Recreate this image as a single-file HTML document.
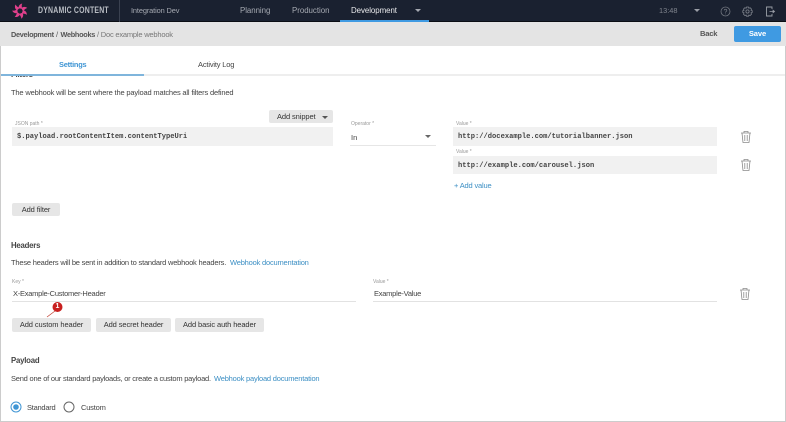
<!DOCTYPE html>
<html><head><meta charset="utf-8"><style>
html,body{margin:0;padding:0;background:#fff}
#p{position:relative;width:786px;height:422px;overflow:hidden;background:#fff;font-family:"Liberation Sans",sans-serif;color:#333;filter:blur(.3px)}
#p div,#p svg{position:absolute}
.t{white-space:nowrap;line-height:10px}
.s{font-size:7.5px;letter-spacing:-.17px;color:#444}
.h{font-size:7.8px;font-weight:bold;letter-spacing:-.22px;color:#444}
.b{background:#e6e6e6;border-radius:2px;font-size:7.5px;letter-spacing:-.1px;line-height:14px;height:14px;text-align:center;color:#333;white-space:nowrap}
.in{background:#f1f1f1}
.m{font-family:"Liberation Mono",monospace;font-size:7.1px;font-weight:bold;color:#444;white-space:nowrap;line-height:10px}
.l{font-size:5px;color:#999;white-space:nowrap;line-height:6px}
</style></head><body><div id="p">
<div style="left:0;top:0;width:786px;height:22px;background:#1a2130"></div>
<div style="left:0;top:21px;width:786px;height:1px;background:#0b0e14"></div>
<svg style="left:12px;top:3px" width="16" height="16" viewBox="-9 -9 18 18"><g fill="#e0408c"><path d="M-1.5 -3C-2 -6 0 -8 2.5 -8.5C1.5 -6.5 2 -4.5 2.5 -2.5Z"/><path transform="rotate(51)" d="M-1.5 -3C-2 -6 0 -8 2.5 -8.5C1.5 -6.5 2 -4.5 2.5 -2.5Z"/><path transform="rotate(103)" d="M-1.5 -3C-2 -6 0 -8 2.5 -8.5C1.5 -6.5 2 -4.5 2.5 -2.5Z"/><path transform="rotate(154)" d="M-1.5 -3C-2 -6 0 -8 2.5 -8.5C1.5 -6.5 2 -4.5 2.5 -2.5Z"/><path transform="rotate(206)" d="M-1.5 -3C-2 -6 0 -8 2.5 -8.5C1.5 -6.5 2 -4.5 2.5 -2.5Z"/><path transform="rotate(257)" d="M-1.5 -3C-2 -6 0 -8 2.5 -8.5C1.5 -6.5 2 -4.5 2.5 -2.5Z"/><path transform="rotate(309)" d="M-1.5 -3C-2 -6 0 -8 2.5 -8.5C1.5 -6.5 2 -4.5 2.5 -2.5Z"/></g></svg>
<div class="t" style="left:38px;top:6px;font-size:9.5px;font-weight:bold;color:#b9bdc4;letter-spacing:.28px;transform:scaleX(.73);transform-origin:left">DYNAMIC CONTENT</div>
<div style="left:119px;top:0;width:1px;height:22px;background:#3a4150"></div>
<div class="t" style="left:131px;top:6px;font-size:7.4px;letter-spacing:-.12px;color:#a5a9b1">Integration Dev</div>
<div class="t" style="left:240px;top:6px;font-size:7.9px;letter-spacing:-.05px;color:#a5a9b1">Planning</div>
<div class="t" style="left:292px;top:6px;font-size:7.9px;letter-spacing:-.03px;color:#a5a9b1">Production</div>
<div class="t" style="left:351px;top:6px;font-size:7.9px;letter-spacing:-.05px;color:#e8e9eb">Development</div>
<div style="left:340px;top:20px;width:89px;height:2px;background:#3f9ae2"></div>
<div style="left:415px;top:9px;width:0;height:0;border-left:3px solid transparent;border-right:3px solid transparent;border-top:3px solid #a5a9b1"></div>
<div class="t" style="left:659px;top:6px;font-size:7.4px;color:#80858e">13:48</div>
<div style="left:694px;top:9px;width:0;height:0;border-left:3px solid transparent;border-right:3px solid transparent;border-top:3px solid #9a9ea6"></div>
<svg style="left:720px;top:6px" width="11" height="11" viewBox="0 0 11 11"><circle cx="5.5" cy="5.5" r="4.5" fill="none" stroke="#70757e" stroke-width=".8"/><path d="M4.2 4.4C4.3 2.8 6.9 2.9 6.8 4.4C6.8 5.4 5.5 5.4 5.5 6.6M5.5 7.6V8.3" fill="none" stroke="#70757e" stroke-width=".8"/></svg>
<svg style="left:742px;top:5.5px" width="11" height="11" viewBox="0 0 11 11"><circle cx="5.5" cy="5.5" r="1.6" fill="none" stroke="#80858e" stroke-width=".8"/><path d="M4.5 1H6.5L6.9 2.2 8.1 1.7 9.5 3.1 9 4.3 10.2 4.7V6.5L9 6.9 9.5 8.1 8.1 9.5 6.9 9 6.5 10.2H4.5L4.1 9 2.9 9.5 1.5 8.1 2 6.9.8 6.5V4.7L2 4.3 1.5 3.1 2.9 1.7 4.1 2.2Z" fill="none" stroke="#80858e" stroke-width=".8"/></svg>
<svg style="left:765px;top:6px" width="11" height="11" viewBox="0 0 11 11"><path d="M7 3V1H1.5V10H7V8" fill="none" stroke="#9a9ea6" stroke-width=".9"/><path d="M4.5 5.5H8M8 4.2L9.6 5.5 8 6.8Z" fill="#9a9ea6" stroke="#9a9ea6" stroke-width=".7"/></svg>

<div style="left:0;top:22px;width:786px;height:24px;background:#e4e4e4"></div>
<div class="t h" style="left:11px;top:30px;font-size:7.3px;color:#555;letter-spacing:-.28px">Development</div>
<div class="t s" style="left:56px;top:30px;color:#555">/</div>
<div class="t h" style="left:60.5px;top:30px;font-size:7.3px;color:#555;letter-spacing:-.28px">Webhooks</div>
<div class="t s" style="left:97px;top:30px;color:#777;letter-spacing:-.2px">/ Doc example webhook</div>
<div class="t h" style="left:700px;top:29px;font-size:7.6px;color:#555">Back</div>
<div style="left:734px;top:26px;width:47px;height:16px;background:#3f9ae2;border-radius:2px;color:#fff;font-size:7.6px;letter-spacing:-.1px;font-weight:bold;line-height:16px;text-align:center">Save</div>

<div class="t h" style="left:59px;top:59.5px;font-size:7.4px;color:#3f95d4;letter-spacing:-.22px">Settings</div>
<div class="t s" style="left:198px;top:59.5px">Activity Log</div>
<div style="left:0;top:74px;width:786px;height:2px;background:#eee"></div>
<div style="left:1px;top:74px;width:143px;height:2px;background:#7fb5dc"></div>

<div style="left:11px;top:76px;width:30px;height:3px;overflow:hidden"><div class="t h" style="left:0;top:-6px">Filters</div></div>
<div class="t s" style="left:11px;top:88px">The webhook will be sent where the payload matches all filters defined</div>

<div class="b" style="left:269px;top:110px;width:64px;height:13px;line-height:13px;text-align:left;text-indent:8px">Add snippet</div>
<div style="left:322px;top:116px;width:0;height:0;border-left:3px solid transparent;border-right:3px solid transparent;border-top:3px solid #555"></div>

<div class="l" style="left:15px;top:121px">JSON path *</div>
<div class="in" style="left:12px;top:127px;width:321px;height:19px"></div>
<div class="m" style="left:17px;top:132px">$.payload.rootContentItem.contentTypeUri</div>

<div class="l" style="left:351px;top:121px">Operator *</div>
<div class="t" style="left:351px;top:133px;font-size:7.5px;color:#444">In</div>
<div style="left:425px;top:135px;width:0;height:0;border-left:3px solid transparent;border-right:3px solid transparent;border-top:3px solid #666"></div>
<div style="left:350px;top:145px;width:86px;height:1px;background:#e6e6e6"></div>

<div class="l" style="left:456px;top:121px">Value *</div>
<div class="in" style="left:453px;top:127px;width:264px;height:19px"></div>
<div class="m" style="left:458px;top:132px">http://docexample.com/tutorialbanner.json</div>
<div class="l" style="left:456px;top:149px">Value *</div>
<div class="in" style="left:453px;top:156px;width:264px;height:18px"></div>
<div class="m" style="left:458px;top:160.5px">http://example.com/carousel.json</div>
<div class="t s" style="left:454px;top:181px;color:#3c8fc4">+ Add value</div>

<svg style="left:740px;top:130px" width="12" height="14" viewBox="0 0 12 14"><path d="M1 3H11M4 3V1.5H8V3M2 3L3 12.5H9L10 3M4.8 5V11M7.2 5V11" fill="none" stroke="#8a8a8a" stroke-width=".8"/></svg>
<svg style="left:740px;top:158px" width="12" height="14" viewBox="0 0 12 14"><path d="M1 3H11M4 3V1.5H8V3M2 3L3 12.5H9L10 3M4.8 5V11M7.2 5V11" fill="none" stroke="#8a8a8a" stroke-width=".8"/></svg>

<div class="b" style="left:12px;top:203px;width:48px;height:13px;line-height:13px">Add filter</div>

<div class="t h" style="left:11px;top:241px">Headers</div>
<div class="t s" style="left:11px;top:258px;letter-spacing:-.2px">These headers will be sent in addition to standard webhook headers.</div>
<div class="t s" style="left:230px;top:258px;color:#3c8fc4;letter-spacing:-.2px">Webhook documentation</div>

<div class="l" style="left:12px;top:279px">Key *</div>
<div class="t s" style="left:13px;top:289px;letter-spacing:-.25px">X-Example-Customer-Header</div>
<div style="left:12px;top:301px;width:344px;height:1px;background:#e2e2e2"></div>
<div class="l" style="left:373px;top:279px">Value *</div>
<div class="t s" style="left:374px;top:289px;letter-spacing:-.25px">Example-Value</div>
<div style="left:373px;top:301px;width:344px;height:1px;background:#e2e2e2"></div>
<svg style="left:739px;top:287px" width="12" height="14" viewBox="0 0 12 14"><path d="M1 3H11M4 3V1.5H8V3M2 3L3 12.5H9L10 3M4.8 5V11M7.2 5V11" fill="none" stroke="#8a8a8a" stroke-width=".8"/></svg>

<div class="b" style="left:12px;top:318px;width:79px">Add custom header</div>
<div class="b" style="left:96px;top:318px;width:75px">Add secret header</div>
<div class="b" style="left:175px;top:318px;width:89px">Add basic auth header</div>
<svg style="left:44px;top:300px" width="22" height="20" viewBox="0 0 22 20"><path d="M3 17L11 11" stroke="#c0392b" stroke-width=".7"/><circle cx="13.5" cy="7" r="5" fill="#c8201f"/></svg>
<div class="t" style="left:54.5px;top:302px;width:6px;text-align:center;font-size:7px;font-weight:bold;color:#fff">1</div>

<div class="t h" style="left:11px;top:356px">Payload</div>
<div class="t s" style="left:11px;top:374px;letter-spacing:-.22px">Send one of our standard payloads, or create a custom payload.</div>
<div class="t s" style="left:214px;top:374px;color:#3c8fc4;letter-spacing:-.2px">Webhook payload documentation</div>

<svg style="left:10px;top:401px" width="12" height="12" viewBox="0 0 12 12"><circle cx="6" cy="6" r="5" fill="none" stroke="#3f95d4"/><circle cx="6" cy="6" r="2.8" fill="#3f95d4"/></svg>
<div class="t s" style="left:27px;top:403px;letter-spacing:-.25px">Standard</div>
<svg style="left:63px;top:401px" width="12" height="12" viewBox="0 0 12 12"><circle cx="6" cy="6" r="5" fill="none" stroke="#666"/></svg>
<div class="t s" style="left:81px;top:403px;letter-spacing:-.2px">Custom</div>

<div style="left:0;top:46px;width:1px;height:376px;background:#ccc"></div>
<div style="left:785px;top:46px;width:1px;height:376px;background:#ccc"></div>
<div style="left:0;top:421px;width:786px;height:1px;background:#ccc"></div>
</div></body></html>
